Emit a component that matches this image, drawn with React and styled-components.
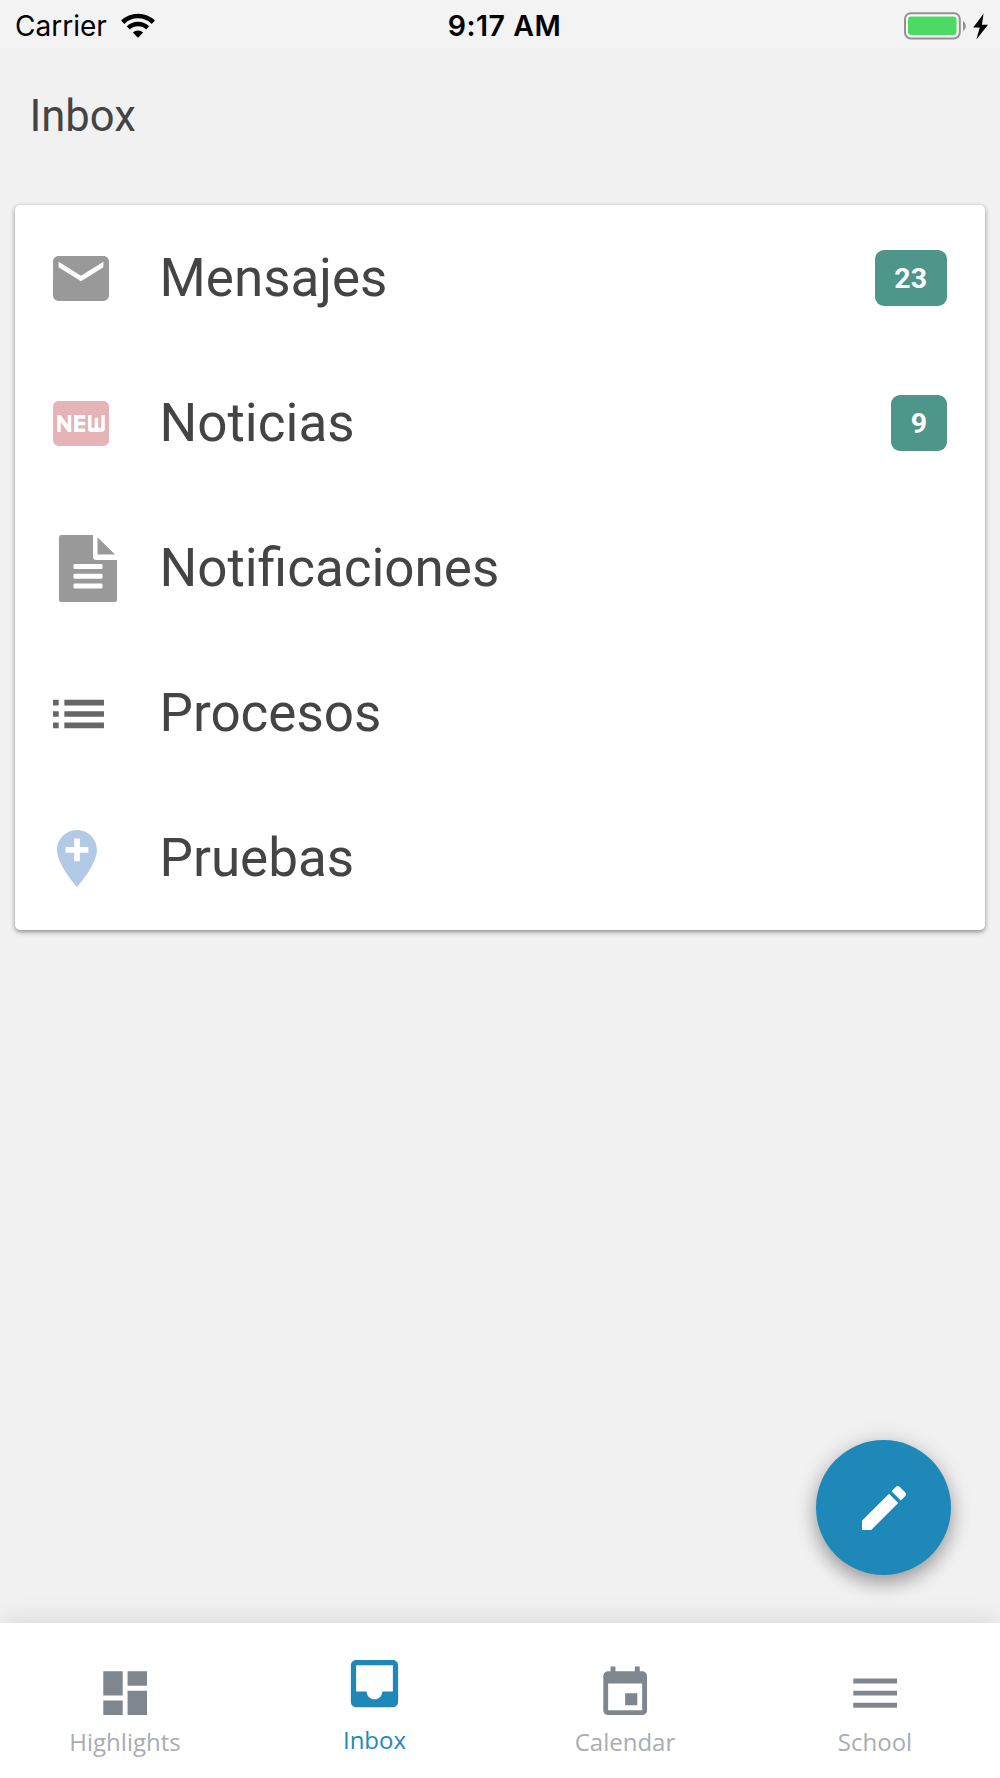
import React from "react";
import styled, { createGlobalStyle } from "styled-components";
import { MdFiberNew } from "react-icons/md";

const GlobalStyle = createGlobalStyle`
  *, *::before, *::after { box-sizing: border-box; }
  body { margin: 0; background: #f1f1f1; }
`;

const Screen = styled.div`
  display: flex;
  flex-direction: column;
  width: 1000px;
  height: 1778px;
  overflow: hidden;
  background: #f1f1f1;
  color: #444;
  font-family: Roboto, "Liberation Sans", sans-serif;
`;

const StatusBar = styled.header`
  flex: none;
  display: grid;
  grid-template-columns: 1fr auto 1fr;
  align-items: center;
  height: 48px;
  padding: 2px 12px 0 15px;
  background: #f3f3f3;
  color: #000;
  font-family: Inter, "Liberation Sans", sans-serif;
  font-size: 28px;
  line-height: 46px;
`;

const Carrier = styled.div`
  display: flex;
  align-items: center;
  gap: 14px;
  padding-top: 1px;
`;

const Clock = styled.div`
  padding: 1px 0 0 6px;
  font-size: 28.5px;
  font-weight: 600;
  letter-spacing: 0.5px;
`;

const Power = styled.div`
  display: flex;
  justify-content: flex-end;
`;

const TitleBar = styled.div`
  flex: none;
  height: 157px;
  padding: 37px 29.5px 0;
`;

const Title = styled.h1`
  margin: 0;
  font-size: 43.5px;
  font-weight: 400;
  line-height: 64px;
`;

const Content = styled.main`
  flex: 1;
  display: flex;
  flex-direction: column;
  justify-content: space-between;
  padding: 0 15px 48px 14.5px;
`;

const Card = styled.ul`
  margin: 0;
  padding: 0;
  list-style: none;
  background: #fff;
  border-radius: 5px;
  box-shadow: 0 2px 5px rgba(0, 0, 0, 0.4), 0 0 3px rgba(0, 0, 0, 0.08);
`;

const Row = styled.li`
  display: flex;
  align-items: center;
  height: 145px;
  padding: 0 38px 0 38.5px;
`;

const IconCell = styled.span`
  flex: none;
  display: flex;
  width: 106.5px;
  padding: 2px 0 0 ${(p) => p.$inset || 0}px;
  color: ${(p) => p.$color};
`;

const RowLabel = styled.span`
  flex: 1;
  font-size: 53px;
  line-height: 64px;
`;

const Badge = styled.span`
  height: 56px;
  margin-top: 1.5px;
  padding: 0 20px 0 19.5px;
  border-radius: 9px;
  background: #4d9689;
  color: #fff;
  font-size: 28.5px;
  font-weight: 700;
  line-height: 58px;
`;

const ComposeButton = styled.button`
  align-self: flex-end;
  display: flex;
  align-items: center;
  justify-content: center;
  width: 135px;
  height: 135px;
  margin-right: 34px;
  padding: 0;
  border: 0;
  border-radius: 50%;
  background: #1e89b9;
  color: #fff;
  box-shadow: 0 9px 18px rgba(0, 0, 0, 0.27), 0 2px 24px rgba(0, 0, 0, 0.14);
`;

const TabBar = styled.nav`
  flex: none;
  display: grid;
  grid-template-columns: repeat(4, 1fr);
  height: 155px;
  background: #fff;
  box-shadow: 0 0 26px rgba(0, 0, 0, 0.12);
`;

const Tab = styled.a`
  display: flex;
  flex-direction: column;
  align-items: center;
  padding-top: ${(p) => (p.$active ? 29 : 41)}px;
  padding-right: ${(p) => (p.$active ? 1 : 0)}px;
  color: ${(p) => (p.$active ? "#1e89b9" : "#7f868e")};
`;

const TabLabel = styled.span`
  margin-top: ${(p) => (p.$active ? 9 : 4)}px;
  color: ${(p) => (p.$active ? "#1e89b9" : "#a9acb2")};
  font-family: "Open Sans", "Noto Sans", sans-serif;
  font-size: 24px;
  font-weight: 400;
  line-height: 32px;
`;

const Glyph = ({ d, size = 24, box = "0 0 24 24", w, h }) => (
  <svg width={w || size} height={h || size} viewBox={box} fill="currentColor" aria-hidden="true">
    <path d={d} />
  </svg>
);

const Wifi = () => (
  <svg width="34" height="26" viewBox="0 0 34 26" fill="none" stroke="#000" aria-hidden="true">
    <path d="M1.700 9.200A22 22 0 0 1 32.300 9.200" strokeWidth="4.700" />
    <path d="M7.300 14.900A14 14 0 0 1 26.700 14.900" strokeWidth="4.300" />
    <path d="M11.800 19.500A7.600 7.600 0 0 1 22.200 19.500L17 24.800Z" fill="#000" stroke="none" />
  </svg>
);

const Battery = () => (
  <svg width="84" height="28" viewBox="0 0 84 28" aria-hidden="true">
    <rect x="1" y="1.200" width="54.800" height="25.200" rx="5.800" fill="#fafafa" stroke="#929292" strokeWidth="2" />
    <rect x="4" y="4.600" width="48.500" height="18.400" rx="3.200" fill="#4cda64" />
    <path d="M59 9c3.700 2 3.700 8 0 10z" fill="#929292" />
    <path d="M79.600 1.700L69.200 15.600H75.700L72.400 27.500L84 12.700H77.900z" fill="#000" />
  </svg>
);

const DocumentIcon = () => (
  <svg width="58" height="67" viewBox="0 0 58 67" fill="currentColor" aria-hidden="true">
    <path
      fillRule="evenodd"
      d="M2.500 0H34V21.500Q34 25 37.500 25H58V65Q58 67 56 67H2Q0 67 0 65V2.500Q0 0 2.500 0ZM15.500 29H42.500Q43.500 29 43.500 30V33Q43.500 34 42.500 34H15.500Q14.500 34 14.500 33V30Q14.500 29 15.500 29ZM15.500 38.700H42.500Q43.500 38.700 43.500 39.700V42.700Q43.500 43.700 42.500 43.700H15.500Q14.500 43.700 14.500 42.700V39.700Q14.500 38.700 15.500 38.700ZM15.500 48.400H42.500Q43.500 48.400 43.500 49.400V52.400Q43.500 53.400 42.500 53.400H15.500Q14.500 53.400 14.500 52.400V49.400Q14.500 48.400 15.500 48.400Z"
    />
    <path d="M38.500 2.300L56 19.500H38.500Z" />
  </svg>
);

const MailIcon = () => (
  <Glyph
    w={56}
    h={45}
    box="2 4 20 16"
    d="M20 4H4c-1.100 0-1.990.9-1.990 2L2 18c0 1.100.9 2 2 2h16c1.100 0 2-.9 2-2V6c0-1.100-.9-2-2-2zm0 4l-8 5-8-5V6l8 5 8-5v2z"
  />
);

const ListIcon = () => (
  <Glyph w={51} h={30} box="3 6.700 18 10.600" d="M3 13h2v-2H3v2zm0 4h2v-2H3v2zm0-8h2V7H3v2zm4 4h14v-2H7v2zm0 4h14v-2H7v2zM7 7v2h14V7H7z" />
);

const PinIcon = () => (
  <Glyph w={40} h={57} box="5 2 14 20" d="M12 2C8.140 2 5 5.140 5 9c0 5.250 7 13 7 13s7-7.750 7-13c0-3.860-3.140-7-7-7zm4 8h-3v3h-2v-3H8V8h3V5h2v3h3v2z" />
);

const NewIcon = styled(MdFiberNew).attrs({ viewBox: "2 4 20 16" })`
  width: 56px;
  height: 45px;
`;

const ROWS = [
  { label: "Mensajes", icon: <MailIcon />, color: "#999", badge: 23 },
  { label: "Noticias", icon: <NewIcon />, color: "#e6b3b7", badge: 9 },
  { label: "Notificaciones", icon: <DocumentIcon />, color: "#999", inset: 5.5 },
  { label: "Procesos", icon: <ListIcon />, color: "#666" },
  { label: "Pruebas", icon: <PinIcon />, color: "#b3cae7", inset: 3.6 },
];

const TABS = [
  { label: "Highlights", d: "M3 13h8V3H3v10zm0 8h8v-6H3v6zm10 0h8V11h-8v10zm0-18v6h8V3h-8z" },
  {
    label: "Inbox",
    active: true,
    d: "M19 3H4.990c-1.110 0-1.980.890-1.980 2L3 19c0 1.100.880 2 1.990 2H19c1.100 0 2-.9 2-2V5c0-1.110-.9-2-2-2zm0 12h-4c0 1.660-1.350 3-3 3s-3-1.340-3-3H4.990V5H19v10z",
  },
  {
    label: "Calendar",
    d: "M17 12h-5v5h5v-5zM16 1v2H8V1H6v2H5c-1.110 0-1.990.9-1.990 2L3 19c0 1.100.890 2 2 2h14c1.100 0 2-.9 2-2V5c0-1.100-.9-2-2-2h-1V1h-2zm3 18H5V8h14v11z",
  },
  { label: "School", d: "M3 18h18v-2H3v2zm0-5h18v-2H3v2zm0-7v2h18V6H3z" },
];

export default function App() {
  return (
    <>
      <GlobalStyle />
      <Screen>
        <StatusBar>
          <Carrier>
            Carrier
            <Wifi />
          </Carrier>
          <Clock>9:17 AM</Clock>
          <Power>
            <Battery />
          </Power>
        </StatusBar>
        <TitleBar>
          <Title>Inbox</Title>
        </TitleBar>
        <Content>
          <Card>
            {ROWS.map((row) => (
              <Row key={row.label}>
                <IconCell $color={row.color} $inset={row.inset}>
                  {row.icon}
                </IconCell>
                <RowLabel>{row.label}</RowLabel>
                {row.badge && <Badge>{row.badge}</Badge>}
              </Row>
            ))}
          </Card>
          <ComposeButton aria-label="Compose">
            <Glyph
              size={44}
              box="64 64 384 384"
              d="M64 368v80h80l235.727-235.729-79.999-79.998L64 368zm377.602-217.602c8.531-8.531 8.531-21.334 0-29.865l-50.135-50.135c-8.531-8.531-21.334-8.531-29.865 0l-39.468 39.469 79.999 79.998 39.469-39.467z"
            />
          </ComposeButton>
        </Content>
        <TabBar>
          {TABS.map((tab) => (
            <Tab key={tab.label} $active={tab.active}>
              <Glyph size={tab.active ? 63 : 58.3} d={tab.d} />
              <TabLabel $active={tab.active}>{tab.label}</TabLabel>
            </Tab>
          ))}
        </TabBar>
      </Screen>
    </>
  );
}
